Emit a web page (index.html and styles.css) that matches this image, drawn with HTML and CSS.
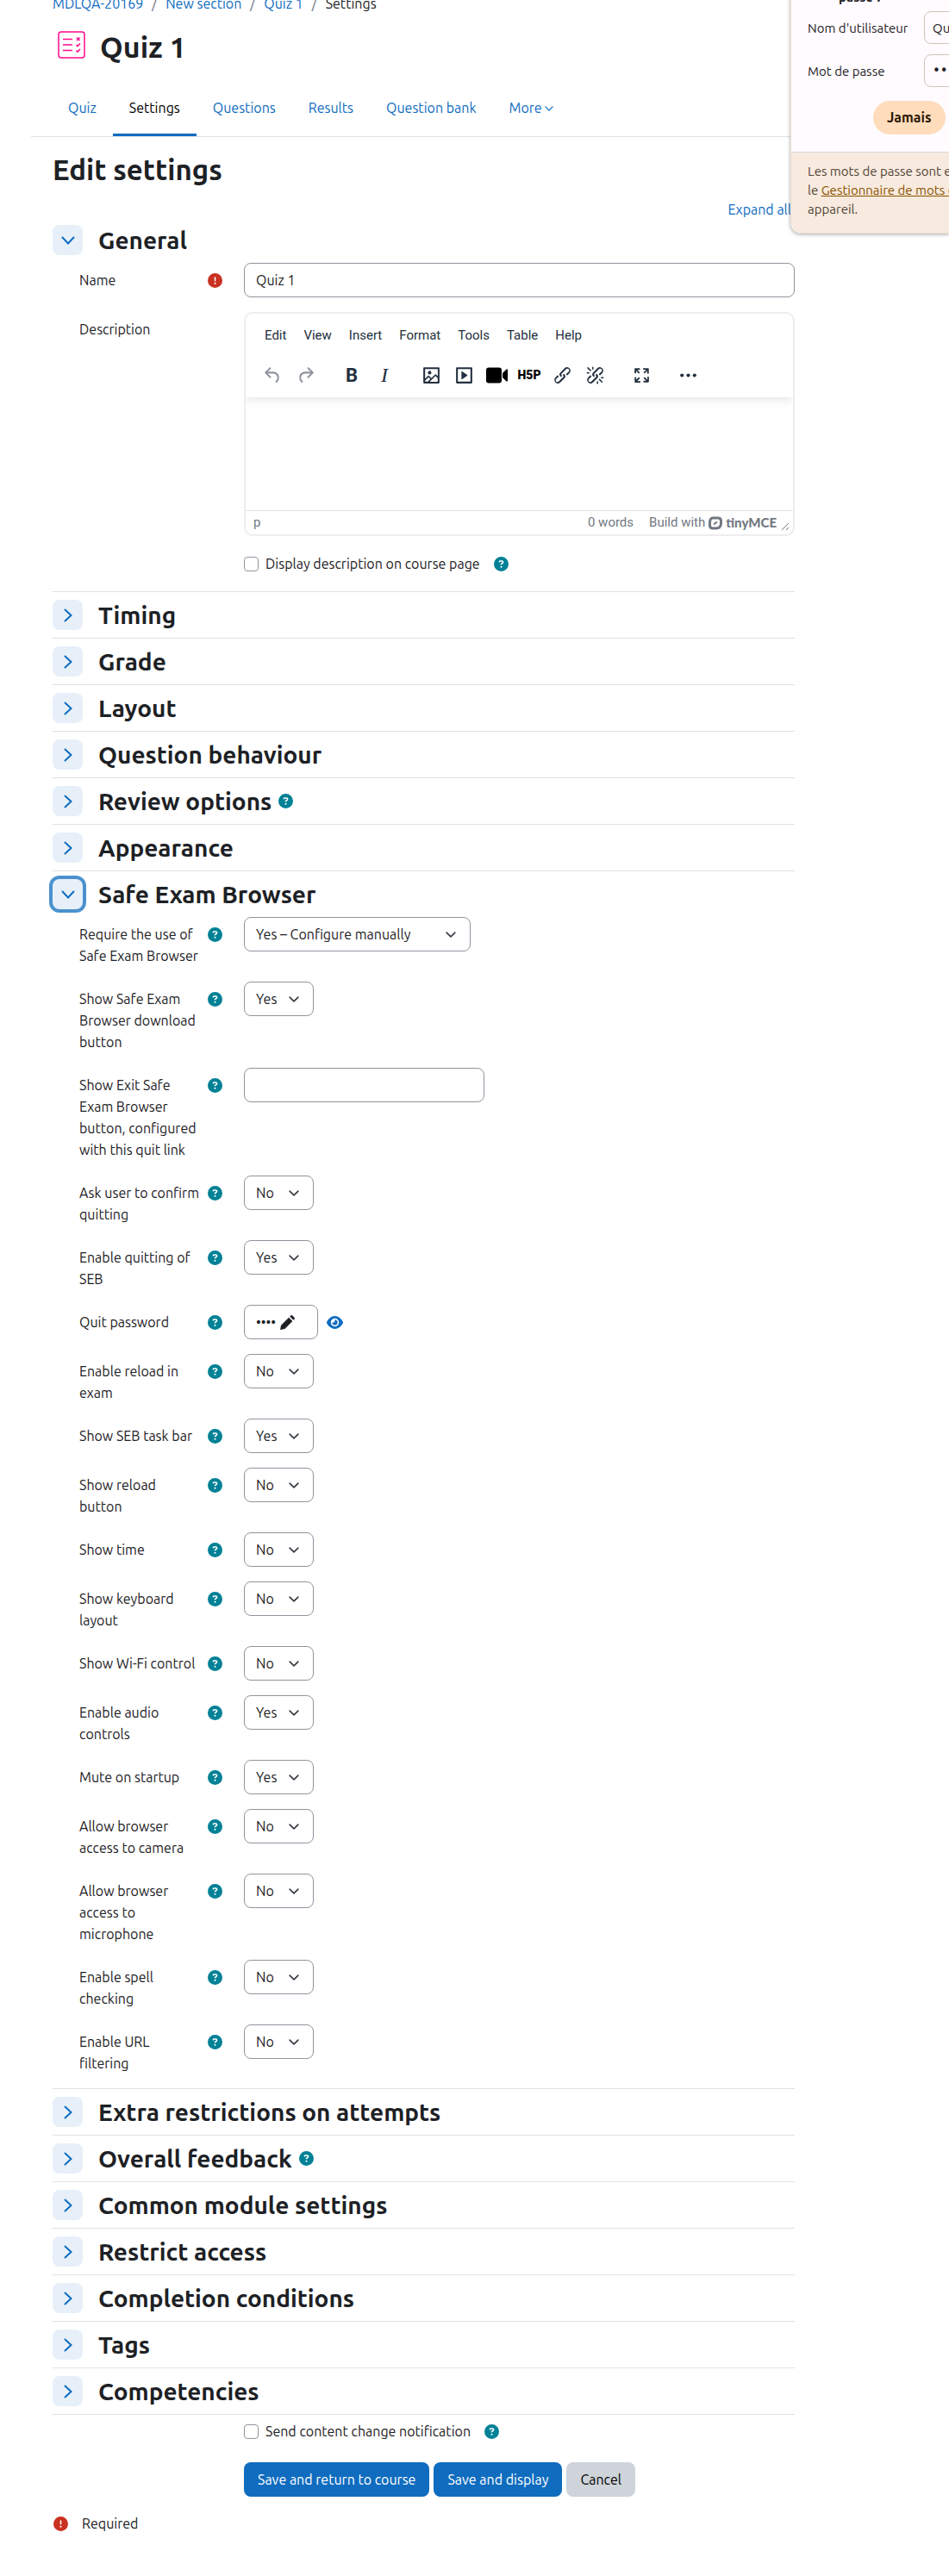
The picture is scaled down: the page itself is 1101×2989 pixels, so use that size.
FILE: index.html
```html
<!DOCTYPE html>
<html lang="en">
    <head>
        <meta charset="UTF-8">
        <meta name="viewport" content="width=device-width, initial-scale=1">
        <title>Quiz 1: Edit settings</title>
        <link rel="stylesheet" href="styles.css">
    </head>
    <body>
        <!-- icon sprite -->
        <svg class="sprite" aria-hidden="true">
            <symbol id="i-help" viewBox="0 0 512 512"><path d="M256 512A256 256 0 1 0 256 0a256 256 0 1 0 0 512zM169.800 165.300c7.900-22.300 29.100-37.300 52.800-37.300h58.300c34.900 0 63.100 28.300 63.100 63.100c0 22.600-12.100 43.500-31.700 54.800L280 264.400c-.2 13-10.900 23.600-24 23.600c-13.300 0-24-10.700-24-24V250.500c0-8.600 4.600-16.500 12.100-20.800l44.300-25.400c4.700-2.700 7.600-7.700 7.600-13.100c0-8.400-6.800-15.100-15.100-15.100H222.600c-3.400 0-6.400 2.100-7.500 5.300l-.4 1.200c-4.400 12.500-18.200 19-30.600 14.600s-19-18.200-14.600-30.600l.4-1.200zM224 352a32 32 0 1 1 64 0 32 32 0 1 1 -64 0z"/></symbol>
            <symbol id="i-req" viewBox="0 0 512 512"><path d="M256 512A256 256 0 1 0 256 0a256 256 0 1 0 0 512zm0-384c13.300 0 24 10.700 24 24V264c0 13.300-10.700 24-24 24s-24-10.700-24-24V152c0-13.300 10.700-24 24-24zM224 352a32 32 0 1 1 64 0 32 32 0 1 1 -64 0z"/></symbol>
            <symbol id="i-chevron" viewBox="0 0 16 16"><path d="M1.500 4.500 8 11.500l6.500-7" fill="none" stroke="currentColor" stroke-width="2" stroke-linecap="round"/></symbol>
            <symbol id="i-undo" viewBox="0 0 24 24"><path d="M6.400 8H12c3.700 0 6.200 2 6.800 5.100.6 2.700-.4 5.600-2.300 6.800a1 1 0 0 1-1-1.800c1.100-.6 1.800-2.700 1.400-4.600-.5-2.100-2.100-3.500-4.900-3.500H6.400l3.300 3.300a1 1 0 1 1-1.400 1.400l-5-5a1 1 0 0 1 0-1.400l5-5a1 1 0 0 1 1.400 1.400L6.400 8Z"/></symbol>
            <symbol id="i-link" viewBox="0 0 24 24"><path d="M6.200 12.300a1 1 0 0 1 1.400 1.400l-2 2a2 2 0 1 0 2.600 2.800l4.800-4.800a1 1 0 0 0 0-1.400 1 1 0 1 1 1.400-1.300 2.900 2.900 0 0 1 0 4L9.600 20a3.900 3.900 0 0 1-5.500-5.500l2-2Zm11.600-.6a1 1 0 0 1-1.400-1.400l2-2a2 2 0 1 0-2.600-2.800L11 10.300a1 1 0 0 0 0 1.400A1 1 0 1 1 9.600 13a2.900 2.900 0 0 1 0-4L14.400 4a3.900 3.900 0 0 1 5.500 5.500l-2 2Z"/></symbol>
        </svg>

        <div class="page">
            <nav class="breadcrumb" aria-label="Breadcrumb">
                <a href="#">MDLQA-20169</a><span class="sep">/</span><a href="#">New section</a><span class="sep">/</span><a href="#">Quiz 1</a><span class="sep">/</span><span>Settings</span>
            </nav>

            <header class="activity">
                <svg class="activity-icon" viewBox="0 0 32 32">
                    <rect x="1" y="1" width="30" height="30" rx="3" stroke-width="1.500"/>
                    <path d="M6 9.500h11M6 16h11M6 22.500h11" stroke-width="1.500"/>
                    <path d="m22 7.500 3.500 3.500m0-3.500L22 11M21.500 16l1.500 1.500 3-3M21.500 22.500 23 24l3-3" stroke-width="1.600"/>
                </svg>
                <h1>Quiz 1</h1>
            </header>

            <nav class="tabs" aria-label="Quiz">
                <a href="#">Quiz</a>
                <a href="#" class="active">Settings</a>
                <a href="#">Questions</a>
                <a href="#">Results</a>
                <a href="#">Question bank</a>
                <a href="#">More <svg class="caret"><use href="#i-chevron"/></svg></a>
            </nav>

            <main class="content">
                <h2 class="page-heading">Edit settings</h2>
                <div class="expand"><a href="#">Expand all</a></div>

                <form>
                    <section class="section first">
                        <div class="section-head">
                            <button type="button" class="toggle open" aria-label="General"><svg><use href="#i-chevron"/></svg></button>
                            <h3>General</h3>
                        </div>
                        <div class="row">
                            <div class="label"><label for="name">Name</label><span class="required"><svg><use href="#i-req"/></svg></span></div>
                            <div><input type="text" id="name" class="control wide" value="Quiz 1"></div>
                        </div>
                        <div class="row">
                            <div class="label"><label for="description">Description</label></div>
                            <div class="editor">
                                <div class="editor-top">
                                    <div class="menubar">
                                        <button type="button">Edit</button>
                                        <button type="button">View</button>
                                        <button type="button">Insert</button>
                                        <button type="button">Format</button>
                                        <button type="button">Tools</button>
                                        <button type="button">Table</button>
                                        <button type="button">Help</button>
                                    </div>
                                    <div class="toolbar">
                                        <div class="group muted">
                                            <button type="button" aria-label="Undo"><svg><use href="#i-undo"/></svg></button>
                                            <button type="button" aria-label="Redo"><svg class="flip"><use href="#i-undo"/></svg></button>
                                        </div>
                                        <div class="group">
                                            <button type="button" class="bold">B</button>
                                            <button type="button" class="italic">I</button>
                                        </div>
                                        <div class="group">
                                            <button type="button" aria-label="Image"><svg viewBox="0 0 24 24"><path d="m5 15.700 3.300-3.200c.3-.3.7-.3 1 0L12 15l4.100-4c.3-.4.8-.4 1 0l2 1.900V5H5v10.700ZM5 18V19h3l2.800-2.900-2-2L5 17.900Zm14-3-2.500-2.400-6.400 6.500H19v-4ZM4 3h16c.6 0 1 .4 1 1v16c0 .6-.4 1-1 1H4a1 1 0 0 1-1-1V4c0-.6.4-1 1-1Zm6 8a2 2 0 1 0 0-4 2 2 0 0 0 0 4Z"/></svg></button>
                                            <button type="button" aria-label="Multimedia"><svg viewBox="0 0 24 24"><path d="M4 3h16c.6 0 1 .4 1 1v16c0 .6-.4 1-1 1H4a1 1 0 0 1-1-1V4c0-.6.4-1 1-1Zm1 2v14h14V5H5Zm4.800 2.600 5.600 4a.5.500 0 0 1 0 .8l-5.600 4A.5.500 0 0 1 9 16V8a.5.500 0 0 1 .8-.4Z"/></svg></button>
                                            <button type="button" aria-label="Record video"><svg class="video" viewBox="0 0 27 24"><rect x="1" y="3" width="18" height="18" rx="3"/><path d="M20 9.500 24 5.500q2-1.500 2 .5v12q0 2-2 .5l-4-4Z"/></svg></button>
                                            <button type="button" class="h5p">H5P</button>
                                            <button type="button" aria-label="Link"><svg><use href="#i-link"/></svg></button>
                                            <button type="button" aria-label="Unlink"><svg viewBox="0 0 24 24"><use href="#i-link"/><path d="M7.600 6.300a.8.800 0 0 1-1 1.100L3.300 4.200a.7.700 0 1 1 1-1l3.200 3.100ZM5.100 8.600a.8.800 0 0 1 0 1.500H3a.8.800 0 0 1 0-1.500H5Zm5-3.500a.8.800 0 0 1-1.500 0V3a.8.800 0 0 1 1.500 0V5Zm6 11.800a.8.800 0 0 1 1-1l3.200 3.200a.8.800 0 0 1-1 1L16 17Zm-2.200 2a.8.800 0 0 1 1.500 0V21a.8.800 0 0 1-1.500 0V19Zm5-3.500a.7.700 0 1 1 0-1.500H21a.8.800 0 0 1 0 1.500H19Z"/></svg></button>
                                        </div>
                                        <div class="group">
                                            <button type="button" aria-label="Fullscreen"><svg viewBox="0 0 24 24"><path d="m15.300 10-1.200-1.300 2.900-3h-2.300a.9.900 0 1 1 0-1.700H19c.5 0 .9.400.9.900v4.400a.9.900 0 1 1-1.800 0V7l-2.900 3Zm0 4 3 3v-2.300a.9.900 0 1 1 1.700 0V19c0 .5-.4.900-.9.900h-4.400a.9.900 0 1 1 0-1.800H17l-3-2.900 1.300-1.200ZM10 15.400l-2.900 3h2.300a.9.900 0 1 1 0 1.700H5a.9.900 0 0 1-.9-.9v-4.400a.9.900 0 1 1 1.800 0V17l2.900-3 1.200 1.300ZM8.700 10 5.700 7v2.300a.9.900 0 0 1-1.700 0V5c0-.5.4-.9.9-.9h4.400a.9.900 0 0 1 0 1.800H7l3 2.900-1.300 1.200Z"/></svg></button>
                                        </div>
                                        <div class="group">
                                            <button type="button" aria-label="More"><svg viewBox="0 0 24 24"><circle cx="5" cy="12" r="2"/><circle cx="12" cy="12" r="2"/><circle cx="19" cy="12" r="2"/></svg></button>
                                        </div>
                                    </div>
                                </div>
                                <textarea id="description"></textarea>
                                <div class="statusbar">
                                    <span class="path">p</span>
                                    <span>0 words</span>
                                    <a href="#" class="brand">Build with
                                        <svg class="mark" viewBox="0 0 16 16"><path d="M5 2h6q3.500 0 3.500 3.500V8q0 6-6 6H5q-3.500 0-3.500-3.500V8q0-6 3.500-6Z" stroke-width="3"/><path d="m6 9.500 4-3" stroke-width="2"/></svg>
                                        <b>tinyMCE</b></a>
                                    <svg class="resize" viewBox="0 0 10 10"><path d="M1 9 9 1M6 9l3-3" stroke="currentColor"/></svg>
                                </div>
                            </div>
                        </div>
                        <div class="row">
                            <div class="check">
                                <input type="checkbox" id="showdesc"><label for="showdesc">Display description on course page</label>
                                <button type="button" class="help" aria-label="Help"><svg><use href="#i-help"/></svg></button>
                            </div>
                        </div>
                    </section>

                    <section class="section"><div class="section-head"><button type="button" class="toggle" aria-label="Timing"><svg><use href="#i-chevron"/></svg></button><h3>Timing</h3></div></section>
                    <section class="section"><div class="section-head"><button type="button" class="toggle" aria-label="Grade"><svg><use href="#i-chevron"/></svg></button><h3>Grade</h3></div></section>
                    <section class="section"><div class="section-head"><button type="button" class="toggle" aria-label="Layout"><svg><use href="#i-chevron"/></svg></button><h3>Layout</h3></div></section>
                    <section class="section"><div class="section-head"><button type="button" class="toggle" aria-label="Question behaviour"><svg><use href="#i-chevron"/></svg></button><h3>Question behaviour</h3></div></section>
                    <section class="section"><div class="section-head"><button type="button" class="toggle" aria-label="Review options"><svg><use href="#i-chevron"/></svg></button><h3>Review options</h3><button type="button" class="help" aria-label="Help"><svg><use href="#i-help"/></svg></button></div></section>
                    <section class="section"><div class="section-head"><button type="button" class="toggle" aria-label="Appearance"><svg><use href="#i-chevron"/></svg></button><h3>Appearance</h3></div></section>

                    <section class="section">
                        <div class="section-head">
                            <button type="button" class="toggle open focused" aria-label="Safe Exam Browser"><svg><use href="#i-chevron"/></svg></button>
                            <h3>Safe Exam Browser</h3>
                        </div>
                        <div class="row">
                            <div class="label"><label for="seb-require">Require the use of Safe Exam Browser</label><button type="button" class="help" aria-label="Help"><svg><use href="#i-help"/></svg></button></div>
                            <div><select id="seb-require" class="control long"><option>Yes – Configure manually</option></select></div>
                        </div>
                        <div class="row">
                            <div class="label"><label for="seb-download">Show Safe Exam Browser download button</label><button type="button" class="help" aria-label="Help"><svg><use href="#i-help"/></svg></button></div>
                            <div><select id="seb-download" class="control"><option>Yes</option><option>No</option></select></div>
                        </div>
                        <div class="row">
                            <div class="label"><label for="seb-link">Show Exit Safe<br>Exam Browser button, configured with this quit link</label><button type="button" class="help" aria-label="Help"><svg><use href="#i-help"/></svg></button></div>
                            <div><input type="text" id="seb-link" class="control link"></div>
                        </div>
                        <div class="row">
                            <div class="label"><label for="seb-confirm">Ask user to confirm quitting</label><button type="button" class="help" aria-label="Help"><svg><use href="#i-help"/></svg></button></div>
                            <div><select id="seb-confirm" class="control"><option>No</option><option>Yes</option></select></div>
                        </div>
                        <div class="row">
                            <div class="label"><label for="seb-quit">Enable quitting of SEB</label><button type="button" class="help" aria-label="Help"><svg><use href="#i-help"/></svg></button></div>
                            <div><select id="seb-quit" class="control"><option>Yes</option><option>No</option></select></div>
                        </div>
                        <div class="row">
                            <div class="label"><label for="seb-password">Quit password</label><button type="button" class="help" aria-label="Help"><svg><use href="#i-help"/></svg></button></div>
                            <div class="password">
                                <button type="button" id="seb-password" class="control">•••• <svg viewBox="0 0 16 16"><path d="M0 16 1 11 9.500 2.500l4 4L5 15ZM10.500 1.500l.8-.8q1.200-1.200 2.400 0l1.600 1.600q1.200 1.200 0 2.400l-.8.8Z"/></svg></button>
                                <button type="button" class="reveal" aria-label="Reveal"><svg viewBox="0 0 576 512"><path d="M288 32c-80.800 0-145.500 36.800-192.600 80.600C48.600 156 17.300 208 2.500 243.700c-3.300 7.900-3.300 16.700 0 24.600C17.300 304 48.600 356 95.400 399.400C142.500 443.200 207.200 480 288 480s145.500-36.800 192.600-80.600c46.800-43.500 78.100-95.400 93-131.100c3.300-7.900 3.300-16.700 0-24.600c-14.900-35.700-46.200-87.700-93-131.100C433.500 68.800 368.800 32 288 32zM144 256a144 144 0 1 1 288 0 144 144 0 1 1 -288 0zm144-64c0 35.300-28.700 64-64 64c-7.100 0-13.900-1.200-20.300-3.300c-5.500-1.800-11.900 1.600-11.700 7.400c.3 6.900 1.300 13.800 3.200 20.700c13.700 51.200 66.400 81.600 117.600 67.900s81.600-66.400 67.900-117.600c-11.100-41.500-47.800-69.400-88.600-71.100c-5.800-.2-9.200 6.100-7.400 11.700c2.100 6.400 3.300 13.200 3.300 20.300z"/></svg></button>
                            </div>
                        </div>
                        <div class="row">
                            <div class="label"><label for="seb-reload">Enable reload in exam</label><button type="button" class="help" aria-label="Help"><svg><use href="#i-help"/></svg></button></div>
                            <div><select id="seb-reload" class="control"><option>No</option><option>Yes</option></select></div>
                        </div>
                        <div class="row">
                            <div class="label"><label for="seb-taskbar">Show SEB task bar</label><button type="button" class="help" aria-label="Help"><svg><use href="#i-help"/></svg></button></div>
                            <div><select id="seb-taskbar" class="control"><option>Yes</option><option>No</option></select></div>
                        </div>
                        <div class="row">
                            <div class="label"><label for="seb-reloadbtn">Show reload<br>button</label><button type="button" class="help" aria-label="Help"><svg><use href="#i-help"/></svg></button></div>
                            <div><select id="seb-reloadbtn" class="control"><option>No</option><option>Yes</option></select></div>
                        </div>
                        <div class="row">
                            <div class="label"><label for="seb-time">Show time</label><button type="button" class="help" aria-label="Help"><svg><use href="#i-help"/></svg></button></div>
                            <div><select id="seb-time" class="control"><option>No</option><option>Yes</option></select></div>
                        </div>
                        <div class="row">
                            <div class="label"><label for="seb-keyboard">Show keyboard<br>layout</label><button type="button" class="help" aria-label="Help"><svg><use href="#i-help"/></svg></button></div>
                            <div><select id="seb-keyboard" class="control"><option>No</option><option>Yes</option></select></div>
                        </div>
                        <div class="row">
                            <div class="label"><label for="seb-wifi">Show Wi-Fi control</label><button type="button" class="help" aria-label="Help"><svg><use href="#i-help"/></svg></button></div>
                            <div><select id="seb-wifi" class="control"><option>No</option><option>Yes</option></select></div>
                        </div>
                        <div class="row">
                            <div class="label"><label for="seb-audio">Enable audio<br>controls</label><button type="button" class="help" aria-label="Help"><svg><use href="#i-help"/></svg></button></div>
                            <div><select id="seb-audio" class="control"><option>Yes</option><option>No</option></select></div>
                        </div>
                        <div class="row">
                            <div class="label"><label for="seb-mute">Mute on startup</label><button type="button" class="help" aria-label="Help"><svg><use href="#i-help"/></svg></button></div>
                            <div><select id="seb-mute" class="control"><option>Yes</option><option>No</option></select></div>
                        </div>
                        <div class="row">
                            <div class="label"><label for="seb-camera">Allow browser<br>access to camera</label><button type="button" class="help" aria-label="Help"><svg><use href="#i-help"/></svg></button></div>
                            <div><select id="seb-camera" class="control"><option>No</option><option>Yes</option></select></div>
                        </div>
                        <div class="row">
                            <div class="label"><label for="seb-mic">Allow browser<br>access to<br>microphone</label><button type="button" class="help" aria-label="Help"><svg><use href="#i-help"/></svg></button></div>
                            <div><select id="seb-mic" class="control"><option>No</option><option>Yes</option></select></div>
                        </div>
                        <div class="row">
                            <div class="label"><label for="seb-spell">Enable spell<br>checking</label><button type="button" class="help" aria-label="Help"><svg><use href="#i-help"/></svg></button></div>
                            <div><select id="seb-spell" class="control"><option>No</option><option>Yes</option></select></div>
                        </div>
                        <div class="row">
                            <div class="label"><label for="seb-url">Enable URL<br>filtering</label><button type="button" class="help" aria-label="Help"><svg><use href="#i-help"/></svg></button></div>
                            <div><select id="seb-url" class="control"><option>No</option><option>Yes</option></select></div>
                        </div>
                    </section>

                    <section class="section"><div class="section-head"><button type="button" class="toggle" aria-label="Extra restrictions on attempts"><svg><use href="#i-chevron"/></svg></button><h3>Extra restrictions on attempts</h3></div></section>
                    <section class="section"><div class="section-head"><button type="button" class="toggle" aria-label="Overall feedback"><svg><use href="#i-chevron"/></svg></button><h3>Overall feedback</h3><button type="button" class="help" aria-label="Help"><svg><use href="#i-help"/></svg></button></div></section>
                    <section class="section"><div class="section-head"><button type="button" class="toggle" aria-label="Common module settings"><svg><use href="#i-chevron"/></svg></button><h3>Common module settings</h3></div></section>
                    <section class="section"><div class="section-head"><button type="button" class="toggle" aria-label="Restrict access"><svg><use href="#i-chevron"/></svg></button><h3>Restrict access</h3></div></section>
                    <section class="section"><div class="section-head"><button type="button" class="toggle" aria-label="Completion conditions"><svg><use href="#i-chevron"/></svg></button><h3>Completion conditions</h3></div></section>
                    <section class="section"><div class="section-head"><button type="button" class="toggle" aria-label="Tags"><svg><use href="#i-chevron"/></svg></button><h3>Tags</h3></div></section>
                    <section class="section"><div class="section-head"><button type="button" class="toggle" aria-label="Competencies"><svg><use href="#i-chevron"/></svg></button><h3>Competencies</h3></div></section>

                    <div class="form-end">
                        <div class="row">
                            <div class="check">
                                <input type="checkbox" id="notify"><label for="notify">Send content change notification</label>
                                <button type="button" class="help" aria-label="Help"><svg><use href="#i-help"/></svg></button>
                            </div>
                        </div>
                        <div class="row">
                            <div class="actions">
                                <button type="submit" class="btn primary">Save and return to course</button>
                                <button type="submit" class="btn primary">Save and display</button>
                                <button type="button" class="btn">Cancel</button>
                            </div>
                        </div>
                        <div class="required-note"><span class="required"><svg><use href="#i-req"/></svg></span>Required</div>
                    </div>
                </form>
            </main>
        </div>

        <!-- browser password prompt -->
        <aside class="prompt" lang="fr">
            <div class="prompt-body">
                <strong>passe ?</strong>
                <div class="field"><label for="p-user">Nom d'utilisateur</label><input type="text" id="p-user" value="Quit"></div>
                <div class="field"><label for="p-pass">Mot de passe</label><input type="password" id="p-pass" value="quit"></div>
                <div class="prompt-actions"><button type="button">Jamais</button></div>
            </div>
            <p class="prompt-foot">Les mots de passe sont enregistrés<br>le <a href="#">Gestionnaire de mots de passe</a><br>appareil.</p>
        </aside>
    </body>
</html>
```
FILE: styles.css
```css
* {
    box-sizing: border-box;
}
body {
    margin: 0;
    position: relative;
    overflow: hidden;
    background: #fff;
    color: #1d2125;
    font-family: Ubuntu, "Noto Sans", sans-serif;
    font-size: 16px;
    line-height: 25px;
}
a {
    color: #0f6cbf;
    text-decoration: none;
}
button, input, select, textarea {
    font: inherit;
    color: inherit;
}
button {
    padding: 0;
    border: 0;
    background: none;
}
svg {
    fill: currentColor;
}
.sprite {
    display: none;
}
.page {
    margin: -8px 155px 0 36px;
    padding-bottom: 48px;
}
.breadcrumb {
    padding: 0 25px;
}
.breadcrumb .sep {
    padding: 0 10px;
    color: #6a737b;
}

.activity {
    display: flex;
    align-items: center;
    gap: 17px;
    height: 74px;
    padding-left: 31px;
    margin-bottom: 8px;
}
.activity-icon {
    width: 32px;
    height: 32px;
    margin-bottom: 4px;
    fill: none;
    stroke: #ff0a8c;
}
h1, h2, h3 {
    margin: 0;
    font-weight: 600;
}
h1 {
    font-size: 34px;
    font-weight: 700;
    line-height: 40px;
}

.tabs {
    display: flex;
    padding-left: 24px;
    border-bottom: 1px solid #dee2e6;
}
.tabs a {
    padding: 14px 19px 17px;
    border-bottom: 3px solid transparent;
}
.tabs .active {
    color: #000;
    border-color: #0f6cbf;
}
.caret {
    width: 10px;
    height: 10px;
}

.content {
    padding: 18px 24px 0 25px;
}
.page-heading {
    font-size: 33px;
    line-height: 40px;
}
.expand {
    margin-top: 14px;
    padding-right: 4px;
    text-align: right;
}

.section {
    border-top: 1px solid #dee2e6;
}
.section.first {
    border-color: transparent;
    margin-top: -5px;
}
.section-head {
    display: flex;
    align-items: center;
    padding: 9px 0;
}
.section-head h3 {
    margin-left: 18px;
    font-size: 28px;
    line-height: 35px;
}
.section-head .help {
    margin-left: 8px;
}
.toggle {
    width: 35px;
    height: 35px;
    border-radius: 8px;
    background: #e7f0f9;
    color: #0f6cbf;
    display: grid;
    place-items: center;
}
.toggle svg {
    width: 16px;
    height: 16px;
    transform: rotate(-90deg);
}
.toggle.open svg {
    transform: none;
}
.toggle.focused {
    box-shadow: 0 0 0 4px #4b91cf;
}

.row {
    display: grid;
    grid-template-columns: 191px 1fr;
    padding-left: 31px;
    margin-bottom: 16px;
}
.section .row:last-child {
    margin-bottom: 15px;
}
.row > :last-child {
    grid-column: 2;
}
.label {
    display: flex;
    justify-content: space-between;
    align-items: flex-start;
    min-height: 41px;
    padding: 8px 25px 1px 0;
}
.row > .label {
    grid-column: 1;
}
.help, .required {
    flex: none;
    display: grid;
    place-items: center;
    width: 17px;
    height: 25px;
    color: #008196;
}
.required {
    color: #ca3120;
}
.help svg, .required svg {
    width: 17px;
    height: 17px;
}

.control {
    height: 40px;
    padding: 0 13px;
    border: 1px solid #8f959e;
    border-radius: 8px;
    background: #fff;
}
select.control {
    width: 81px;
    appearance: none;
    background: #fff url("data:image/svg+xml,%3Csvg xmlns='http://www.w3.org/2000/svg' viewBox='0 0 16 16'%3E%3Cpath d='M2 5l6 6 6-6' fill='none' stroke='%23343a40' stroke-width='2' stroke-linecap='round' stroke-linejoin='round'/%3E%3C/svg%3E") no-repeat right 14px center / 16px 13px;
}
select.long {
    width: 263px;
}
.control.wide {
    display: block;
    width: 100%;
}
.control.link {
    width: 279px;
}
.password {
    display: flex;
    align-items: flex-start;
    gap: 10px;
}
.password .control {
    width: 86px;
    text-align: left;
    white-space: nowrap;
}
.password .control svg {
    width: 17px;
    height: 17px;
    margin-left: 1px;
    vertical-align: -3px;
}
.reveal {
    height: 40px;
    color: #0f6cbf;
}
.reveal svg {
    display: block;
    width: 19px;
    height: 17px;
}

.check {
    display: flex;
    align-items: center;
    height: 33px;
}
.check input {
    appearance: none;
    width: 17px;
    height: 17px;
    margin: 0 8px 0 0;
    border: 1px solid #8f959e;
    border-radius: 4px;
}
.check .help {
    margin-left: 16px;
}

/* editor */
.editor {
    border: 2px solid #eee;
    border-radius: 10px;
    overflow: hidden;
    color: #222f3e;
    font-family: Roboto, sans-serif;
    font-size: 15px;
}
.editor-top {
    position: relative;
    height: 97px;
    padding: 10px 12px 0;
    box-shadow: 0 2px 10px rgba(34, 47, 62, .14);
}
.menubar {
    display: flex;
    gap: 20px;
    padding: 3px 10px 0;
}
.toolbar {
    display: flex;
    gap: 16px;
    margin-top: 14px;
}
.group {
    display: flex;
}
.group button {
    display: grid;
    place-items: center;
    width: 38px;
    height: 38px;
}
.group svg {
    width: 25px;
    height: 25px;
}
.group .video {
    width: 27px;
    color: #000;
}
.group .flip {
    transform: scaleX(-1);
}
.muted {
    color: #8f959e;
}
.group .bold {
    font-size: 22px;
    font-weight: 700;
}
.group .italic {
    font-family: "Liberation Serif", serif;
    font-size: 24px;
    font-style: italic;
}
.group .h5p {
    color: #000;
    font-size: 14px;
    font-weight: 900;
}
.editor textarea {
    display: block;
    width: 100%;
    height: 131px;
    border: 0;
    resize: none;
    background: transparent;
}
.statusbar {
    display: flex;
    align-items: center;
    gap: 18px;
    height: 28px;
    padding: 0 4px 0 9px;
    border-top: 1px solid #e3e3e3;
    color: #717882;
}
.statusbar .path {
    margin-right: auto;
}
.brand {
    display: flex;
    align-items: center;
    gap: 4px;
    color: inherit;
}
.brand .mark {
    width: 16px;
    height: 16px;
    fill: none;
    stroke: currentColor;
}
.brand b {
    font-family: Lato, sans-serif;
    font-weight: 900;
}
.statusbar .resize {
    width: 10px;
    height: 10px;
    margin: 8px 0 0 -13px;
}

.form-end {
    border-top: 1px solid #dee2e6;
    padding-top: 3px;
}
.form-end .check {
    margin-bottom: 3px;
}
.actions {
    display: flex;
    gap: 5px;
}
.btn {
    height: 40px;
    padding: 0 16px;
    border-radius: 8px;
    background: #ced4da;
    color: #000;
}
.btn.primary {
    background: #0f6cbf;
    color: #fff;
}
.required-note {
    display: flex;
    gap: 16px;
    margin-top: 19px;
    padding-left: 1px;
}

/* browser prompt, docked to the right edge */
.prompt {
    position: absolute;
    top: -17px;
    right: 0;
    width: 184px;
    border: 1px solid #eadfd2;
    border-right: 0;
    border-radius: 0 0 0 12px;
    overflow: hidden;
    background: #fffbff;
    box-shadow: 0 1px 4px rgba(0, 0, 0, .35);
    font-size: 15px;
}
.prompt-body {
    padding: 0 0 20px 19px;
}
.prompt strong {
    display: block;
    height: 29px;
    padding-left: 36px;
}
.field {
    display: grid;
    grid-template-columns: 135px 200px;
    align-items: center;
    margin-bottom: 12px;
}
.field input {
    height: 38px;
    padding: 0 9px;
    border: 1px solid #d0c4b8;
    border-radius: 8px;
    background: #fffbff;
}
.field input[type=password] {
    font-family: "DejaVu Sans", sans-serif;
}
.prompt-actions {
    padding: 4px 0 0 76px;
}
.prompt-actions button {
    height: 39px;
    padding: 0 16px;
    border-radius: 20px;
    background: #ffdcbb;
    color: #2b1700;
    font-size: 16px;
    font-weight: 600;
}
.prompt-foot {
    margin: 0;
    padding: 11px 0 16px 19px;
    border-top: 1px solid #d5d8dc;
    background: #f8eade;
    color: #51453a;
    line-height: 22px;
    white-space: nowrap;
}
.prompt-foot a {
    color: #885200;
    text-decoration: underline;
}

@media (max-width: 768px) {
    .page {
        margin-left: 0;
        margin-right: 0;
    }
    .tabs {
        flex-wrap: wrap;
    }
    .row {
        grid-template-columns: 1fr;
        padding-left: 0;
    }
    .row > :last-child {
        grid-column: 1;
    }
    .prompt {
        display: none;
    }
}
```
